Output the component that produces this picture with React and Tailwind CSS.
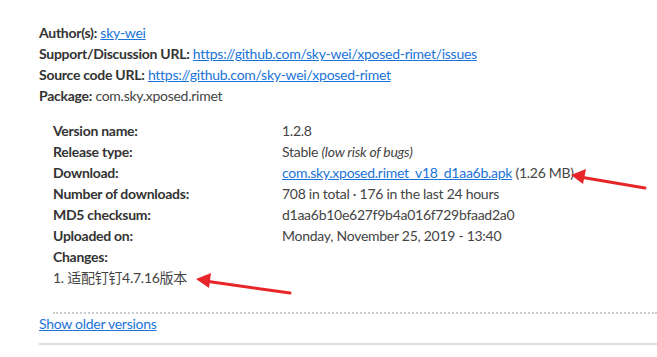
export default function App() {
    const rows = [
        { label: 'Version name:', value: '1.2.8' },
        {
            label: 'Release type:',
            value: (
                <>
                    Stable <i>(low risk of bugs)</i>
                </>
            ),
        },
        {
            label: 'Download:',
            value: (
                <>
                    <a href="#" className="text-[#1a73d9] underline">
                        com.sky.xposed.rimet_v18_d1aa6b.apk
                    </a>{' '}
                    (1.26 MB)
                </>
            ),
        },
        {
            label: 'Number of downloads:',
            value: '708 in total · 176 in the last 24 hours',
        },
        { label: 'MD5 checksum:', value: 'd1aa6b10e627f9b4a016f729bfaad2a0' },
        { label: 'Uploaded on:', value: 'Monday, November 25, 2019 - 13:40' },
    ];

    return (
        <div
            className="relative h-[357px] w-[657px] overflow-hidden bg-white pl-[39px] pt-[22px] text-[14px] leading-[21px] tracking-[-0.27px] text-[#444]"
            style={{ fontFamily: 'Lato, "Noto Sans CJK SC", sans-serif' }}
        >
            <div>
                <b className="text-[#333]">Author(s):</b>{' '}
                <a href="#" className="text-[#1a73d9] underline">sky-wei</a>
            </div>
            <div>
                <b className="text-[#333]">Support/Discussion URL:</b>{' '}
                <a href="#" className="text-[#1a73d9] underline">
                    https://github.com/sky-wei/xposed-rimet/issues
                </a>
            </div>
            <div>
                <b className="text-[#333]">Source code URL:</b>{' '}
                <a href="#" className="text-[#1a73d9] underline">
                    https://github.com/sky-wei/xposed-rimet
                </a>
            </div>
            <div>
                <b className="text-[#333]">Package:</b> com.sky.xposed.rimet
            </div>

            <div className="mt-[14px] pl-[14px]">
                {rows.map((row) => (
                    <div key={row.label} className="flex">
                        <b className="w-[229px] shrink-0 text-[#333]">{row.label}</b>
                        <span>{row.value}</span>
                    </div>
                ))}
                <b className="block text-[#333]">Changes:</b>
                <div>1. 适配钉钉4.7.16版本</div>
                <div className="mt-[24px] border-t-2 border-dotted border-[#ccc]" />
            </div>

            <div className="-mt-[1px]">
                <a href="#" className="text-[#1a73d9] underline">Show older versions</a>
            </div>
            <div className="mt-[9px] border-t-2 border-[#ddd]" />

            <svg className="absolute left-0 top-0" width="657" height="357">
                <g stroke="#e8262a" strokeWidth="3" fill="#e8262a" strokeLinecap="round">
                    <line x1="645" y1="188" x2="580" y2="177" />
                    <polygon points="571,175 586,169 583,184" stroke="none" />
                    <line x1="290" y1="293" x2="205" y2="281" />
                    <polygon points="196,279 211,273 209,288" stroke="none" />
                </g>
            </svg>
        </div>
    );
}
